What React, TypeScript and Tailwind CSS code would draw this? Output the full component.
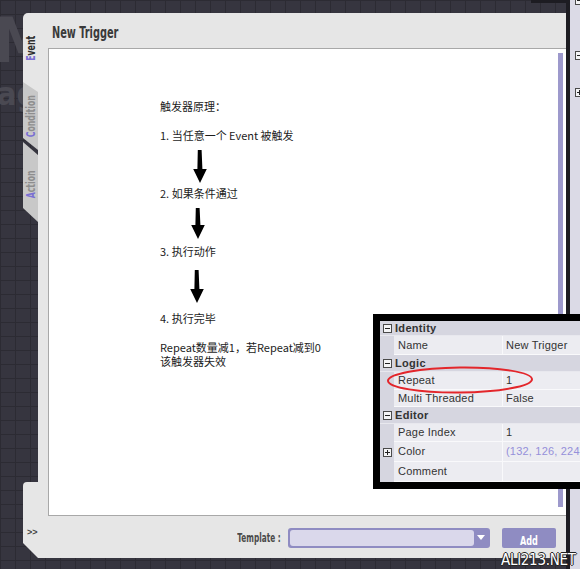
import type { ReactNode } from 'react'

const condensed = { fontFamily: '"Liberation Sans Narrow", "DejaVu Sans Condensed", "Liberation Sans", sans-serif' }

function DownArrow({ ml, h }: { ml: string; h: number }) {
  return (
    <svg width="14" height={h} viewBox={`0 0 14 ${h}`} className={ml}>
      <polygon points={`4.8,0 8.6,0 9.4,${h - 14} 13.8,${h - 14} 7,${h} 0.2,${h - 14} 4.4,${h - 14}`} fill="#000" />
    </svg>
  )
}

function BoxIcon({ plus = false }: { plus?: boolean }) {
  return (
    <svg width="9" height="9" viewBox="0 0 9 9" className="shrink-0">
      <rect x="0.5" y="0.5" width="8" height="8" fill="#f4f4f6" stroke="#4a4a4a" />
      <line x1="2" y1="4.5" x2="7" y2="4.5" stroke="#222" />
      {plus && <line x1="4.5" y1="2" x2="4.5" y2="7" stroke="#222" />}
    </svg>
  )
}

function Tab({ first, rest, active, className, pt }: { first: string; rest: string; active?: boolean; className: string; pt: string }) {
  return (
    <div className={`flex flex-col items-center ${pt} ${className}`}>
      <span
        className={`[writing-mode:vertical-rl] rotate-180 scale-y-[0.72] text-[12px] font-bold leading-none ${active ? 'text-[#2e2e2e]' : 'text-[#8e8e8e]'}`}
        style={condensed}
      >
        <span className="text-[#7a6fd3]">{first}</span>
        {rest}
      </span>
    </div>
  )
}

function Category({ label, h = 'h-[17px]' }: { label: string; h?: string }) {
  return (
    <div className={`flex ${h} items-center gap-[3px] bg-[#d6d6e0] pl-[3px] border-b border-[#e8e8ee]`}>
      <BoxIcon />
      <span className="text-[11px] font-bold text-[#333] tracking-[0.3px]">{label}</span>
    </div>
  )
}

function Prop({ name, value, h = 'h-[19px]', gutter }: { name: string; value: ReactNode; h?: string; gutter?: ReactNode }) {
  return (
    <div className={`flex ${h}`}>
      <div className="w-[14px] shrink-0 bg-[#d6d6e0] flex items-center justify-center">{gutter}</div>
      <div className="w-[109px] shrink-0 flex items-center pl-[4px] bg-[#ececf1] border-b border-r border-[#f9f9fb] text-[11px] text-[#333]">
        {name}
      </div>
      <div className="flex-1 flex items-center pl-[3px] bg-[#ececf1] border-b border-[#f9f9fb] text-[11px] text-[#333] whitespace-nowrap">
        {value}
      </div>
    </div>
  )
}

export default function App() {
  return (
    <div
      className="relative w-[580px] h-[569px] overflow-hidden bg-[#36353f] bg-[linear-gradient(#2c2b33_1px,transparent_1px),linear-gradient(90deg,#2c2b33_1px,transparent_1px)] bg-[size:15px_14px]"
      style={{ fontFamily: '"Liberation Sans", "Noto Sans CJK SC", sans-serif' }}
    >
      {/* canvas lettering behind the window */}
      <div className="absolute left-[-6px] top-[10px] text-[62px] font-bold leading-none text-[#4a4952]" style={condensed}>M</div>
      <div className="absolute left-[-3px] top-[78px] text-[32px] font-bold leading-none text-[#4a4952]" style={condensed}>ag</div>
      <div className="absolute left-[531px] top-0 w-[36px] h-[3px] bg-[#1d1c22]" />

      <div className="relative flex h-full">
        <div className="flex-1 pl-[23px] pt-[13px]">
          <div className="flex h-[545px]">
            {/* side tabs */}
            <div className="w-[15px] flex flex-col">
              <Tab first="E" rest="vent" active pt="pt-[18px]" className="h-[79px] bg-[#e6e6e6] rounded-tl-[5px]" />
              <Tab
                first="C"
                rest="ondition"
                pt="pt-[5px]"
                className="relative z-10 h-[68px] -mt-[10px] bg-[#c8c8c8] [clip-path:polygon(0_0,100%_10px,100%_100%,0_calc(100%-12px))]"
              />
              <Tab
                first="A"
                rest="ction"
                pt="pt-[23px]"
                className="relative z-10 h-[80px] -mt-[8px] bg-[#c8c8c8] [clip-path:polygon(0_0,100%_13px,100%_100%,0_calc(100%-14px))]"
              />
              <div className="flex-1" />
              <div className="h-[76px] bg-[#e6e6e6] rounded-tl-[4px] [clip-path:polygon(0_0,100%_0,100%_100%,0_calc(100%-15px))] pl-[4px] pt-[36px]">
                <span className="text-[9px] font-bold leading-none text-[#444]">&gt;&gt;</span>
              </div>
            </div>

            {/* window body */}
            <div className="flex-1 flex flex-col bg-[#e6e6e6]">
              <div className="h-[35px] flex items-center pl-[14px] pt-[4px]">
                <span className="origin-left scale-x-[0.68] text-[16px] font-bold text-[#3a3a3a]" style={condensed}>New Trigger</span>
              </div>

              <div className="ml-[10px] flex-1 flex bg-white border border-r-0 border-[#a8a8a8]">
                <div className="flex-1 flex flex-col pl-[111px] text-[11px] leading-[14px] text-[#1c1c1c]" style={{ fontFamily: '"Noto Sans CJK SC", "Liberation Sans", sans-serif' }}>
                  <div className="mt-[50px] h-[14px]">触发器原理：</div>
                  <div className="mt-[15px] h-[14px]">1. 当任意一个 Event 被触发</div>
                  <DownArrow ml="mt-[8px] ml-[33px]" h={33} />
                  <div className="mt-[3px] h-[14px]">2. 如果条件通过</div>
                  <DownArrow ml="mt-[8px] ml-[31px]" h={31} />
                  <div className="mt-[5px] h-[14px]">3. 执行动作</div>
                  <DownArrow ml="mt-[12px] ml-[30px]" h={33} />
                  <div className="mt-[8px] h-[14px]">4. 执行完毕</div>
                  <p className="mt-[15px]">
                    Repeat数量减1，若Repeat减到0
                    <br />
                    该触发器失效
                  </p>
                </div>
                <div className="w-[5px] mr-[3px] mt-[4px] mb-[8px] bg-[#9d99cc]" />
              </div>

              <div className="h-[42px] flex items-center justify-end pr-[10px] pt-[1px]">
                <span className="origin-right scale-x-[0.68] text-[12px] font-bold text-[#4a4a4a] mr-[7px]" style={condensed}>Template :</span>
                <div className="w-[202px] h-[20px] flex rounded-[3px] bg-[#8f8cc2] p-[2px]">
                  <div className="flex-1 rounded-[3px] bg-[#dad8eb]" />
                  <div className="w-[14px] flex items-center justify-center">
                    <svg width="8" height="5" viewBox="0 0 8 5">
                      <polygon points="0,0 8,0 4,5" fill="#fff" />
                    </svg>
                  </div>
                </div>
                <button className="ml-[12px] w-[54px] h-[20px] rounded-[2px] bg-[#8f8cc2] text-white">
                  <span className="inline-block scale-x-[0.75] text-[12px] font-bold" style={condensed}>Add</span>
                </button>
              </div>
            </div>
          </div>
        </div>

        <div className="w-[4px] bg-[#1d1c22]" />
        <div className="w-[10px] bg-[#dbdae6] flex flex-col pl-[5px]">
          <div className="-mt-[4px]"><BoxIcon /></div>
          <div className="mt-[46px]"><BoxIcon /></div>
          <div className="mt-[28px]"><BoxIcon plus /></div>
        </div>
      </div>

      {/* property grid */}
      <div className="absolute left-[373px] top-[314px] w-[222px] border-[7px] border-black bg-[#d6d6e0] tracking-[0.2px]">
        <Category label="Identity" h="h-[15px]" />
        <Prop name="Name" value="New Trigger" />
        <Category label="Logic" />
        <Prop name="Repeat" value="1" h="h-[18px]" />
        <Prop name="Multi Threaded" value="False" h="h-[17px]" />
        <Category label="Editor" />
        <Prop name="Page Index" value="1" h="h-[18px]" />
        <Prop name="Color" value={<span className="text-[#9590da]">(132, 126, 224)</span>} h="h-[20px]" gutter={<BoxIcon plus />} />
        <Prop name="Comment" value="" h="h-[20px]" />
      </div>

      <svg className="absolute left-[386px] top-[365px]" width="150" height="30" viewBox="0 0 150 30">
        <ellipse cx="74" cy="15" rx="72" ry="12.5" fill="none" stroke="#e3262b" strokeWidth="2" transform="rotate(-0.6 74 15)" />
      </svg>

      <div
        className="absolute left-[501px] top-[553px] text-[15px] leading-none text-white tracking-[-0.3px]"
        style={{ ...condensed, textShadow: '1px 0 #222, -1px 0 #222, 0 1px #222, 0 -1px #222' }}
      >
        ALI213.NET
      </div>
    </div>
  )
}
